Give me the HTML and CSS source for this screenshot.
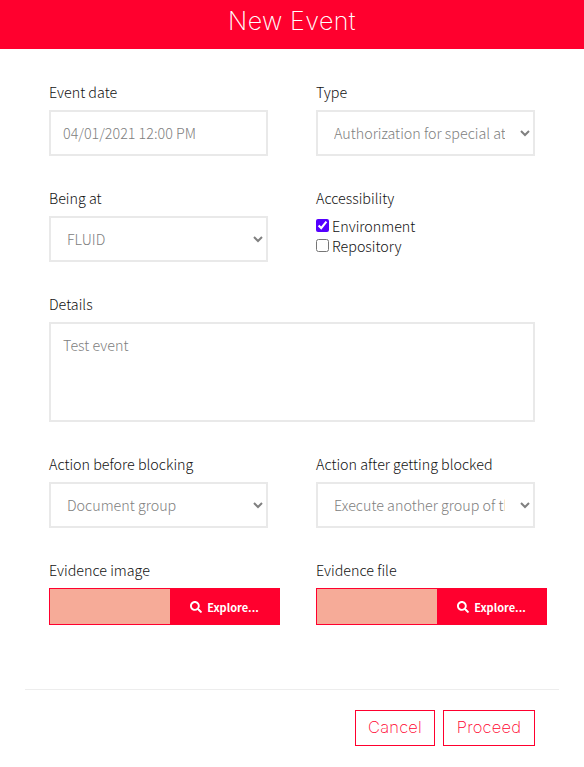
FILE: index.html
```html
<!DOCTYPE html>
<html lang="en">
<head>
<meta charset="utf-8">
<title>New Event</title>
<link rel="stylesheet" href="styles.css">
</head>
<body>
<header class="header"><h1 class="title">New Event</h1></header>
<form class="form">
  <div class="grid">
    <div class="field">
      <label class="label" for="date">Event date</label>
      <input class="control" id="date" type="text" value="04/01/2021 12:00 PM">
    </div>
    <div class="field">
      <label class="label" for="type">Type</label>
      <select class="control" id="type"><option>Authorization for special attack</option></select>
    </div>
    <div class="field">
      <label class="label" for="place">Being at</label>
      <select class="control" id="place"><option>FLUID</option></select>
    </div>
    <div class="field">
      <span class="label">Accessibility</span>
      <label class="check"><input type="checkbox" class="box" checked><span class="option">Environment</span></label>
      <label class="check"><input type="checkbox" class="box"><span class="option">Repository</span></label>
    </div>
    <div class="field wide">
      <label class="label" for="details">Details</label>
      <textarea class="control area" id="details">Test event</textarea>
    </div>
    <div class="field">
      <label class="label" for="before">Action before blocking</label>
      <select class="control" id="before"><option>Document group</option></select>
    </div>
    <div class="field">
      <label class="label" for="after">Action after getting blocked</label>
      <select class="control" id="after"><option>Execute another group of the same client</option></select>
    </div>
    <div class="field">
      <span class="label">Evidence image</span>
      <div class="file"><button type="button" class="explore"><svg class="icon" viewBox="0 0 512 512"><path fill="currentColor" d="M505 442.700 405.300 343c-4.500-4.500-10.600-7-17-7H372c27.600-35.300 44-79.700 44-128C416 93.100 322.900 0 208 0S0 93.100 0 208s93.100 208 208 208c48.300 0 92.700-16.400 128-44v16.300c0 6.400 2.500 12.500 7 17l99.700 99.700c9.400 9.400 24.600 9.400 33.900 0l28.300-28.300c9.400-9.400 9.400-24.600.1-34zM208 336c-70.700 0-128-57.200-128-128 0-70.700 57.200-128 128-128 70.700 0 128 57.200 128 128 0 70.700-57.200 128-128 128z"/></svg><span>Explore...</span></button></div>
    </div>
    <div class="field">
      <span class="label">Evidence file</span>
      <div class="file"><button type="button" class="explore"><svg class="icon" viewBox="0 0 512 512"><path fill="currentColor" d="M505 442.700 405.300 343c-4.500-4.500-10.600-7-17-7H372c27.600-35.300 44-79.700 44-128C416 93.100 322.900 0 208 0S0 93.100 0 208s93.100 208 208 208c48.300 0 92.700-16.400 128-44v16.300c0 6.400 2.500 12.500 7 17l99.700 99.700c9.400 9.400 24.600 9.400 33.900 0l28.300-28.300c9.400-9.400 9.400-24.600.1-34zM208 336c-70.700 0-128-57.200-128-128 0-70.700 57.200-128 128-128 70.700 0 128 57.200 128 128 0 70.700-57.200 128-128 128z"/></svg><span>Explore...</span></button></div>
    </div>
  </div>
  <footer class="footer">
    <button type="button" class="action cancel">Cancel</button>
    <button type="button" class="action proceed">Proceed</button>
  </footer>
</form>
</body>
</html>
```
FILE: styles.css
```css
* { box-sizing: border-box; }
body {
  margin: 0;
  background: #fff;
  color: #111;
  font: 300 14.3px/20px "Noto Sans CJK JP", "Noto Sans", sans-serif;
}
.header { height: 49px; background: #ff002e; }
.title {
  margin: 0;
  color: #fff;
  font: 200 25px/42px Inter, sans-serif;
  letter-spacing: 0.4px;
  text-align: center;
}
.form { padding: 33px 25px 0; }
.grid {
  display: grid;
  grid-template-columns: 219px 219px;
  grid-template-rows: 106px 106px 160px 106px 129px;
  column-gap: 48px;
  padding-left: 24px;
}
.wide { grid-column: 1 / 3; }
.label { display: block; height: 28px; white-space: nowrap; }
.control {
  display: block;
  width: 100%;
  height: 46px;
  margin: 0;
  padding: 9px 12px 11px;
  border: 2px solid #e9e9e9;
  border-radius: 0;
  outline: 0;
  background: #fff;
  color: #808080;
  font: inherit;
}
select.control { padding: 0 12px 2px; }
.area { height: 100px; padding: 11px 12px; resize: none; }
.check { display: flex; align-items: center; gap: 3px; height: 20px; }
.option { height: 20px; line-height: 20px; }
.box { width: 13px; height: 13px; margin: 0 0 2px; accent-color: #5500ff; }
.file {
  display: flex;
  justify-content: flex-end;
  width: 231px;
  height: 37px;
  border: 1px solid #ff002e;
  background: #f6ab98;
}
.explore {
  display: flex;
  align-items: center;
  justify-content: center;
  gap: 5px;
  width: 109px;
  height: 35px;
  padding: 0;
  border: 0;
  background: #ff002e;
  color: #fff;
  font: 700 11px/20px "Noto Sans CJK JP", sans-serif;
}
.icon { width: 12px; height: 12px; }
.footer {
  display: flex;
  justify-content: flex-end;
  gap: 8px;
  padding: 20px 24px 0 0;
  border-top: 1px solid #ededed;
}
.action {
  height: 36px;
  padding: 0 0 2px;
  border: 1px solid #ff002e;
  background: #fff;
  color: #ff002e;
  font: 200 16.5px/20px Inter, sans-serif;
  letter-spacing: 0.2px;
}
.cancel { width: 80px; }
.proceed { width: 92px; }
```
